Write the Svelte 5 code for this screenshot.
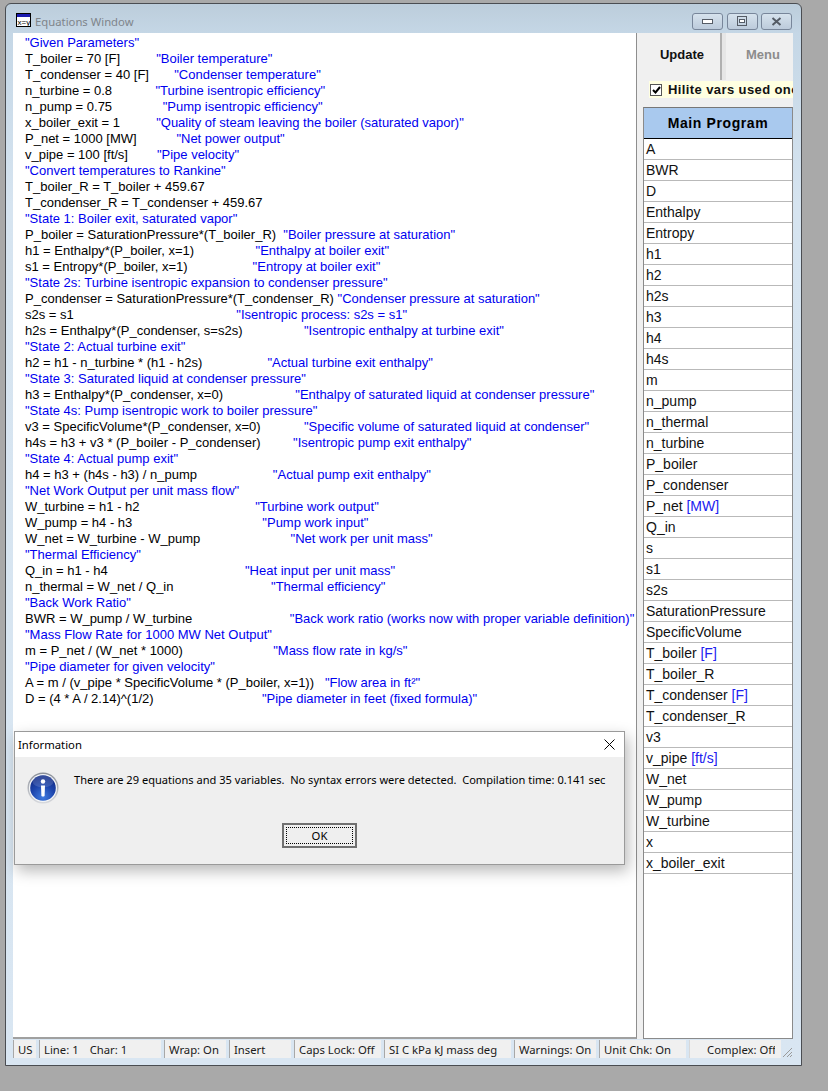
<script lang="ts">
  // Each line is stored as typed in the equations window: code, padding spaces, then the comment
  const pad = (n: number) => " ".repeat(n);

  const lines: [string, string][] = [
    ["", '"Given Parameters"'],
    ["T_boiler = 70 [F]" + pad(10), '"Boiler temperature"'],
    ["T_condenser = 40 [F]" + pad(7), '"Condenser temperature"'],
    ["n_turbine = 0.8" + pad(12), '"Turbine isentropic efficiency"'],
    ["n_pump = 0.75" + pad(14), '"Pump isentropic efficiency"'],
    ["x_boiler_exit = 1" + pad(10), '"Quality of steam leaving the boiler (saturated vapor)"'],
    ["P_net = 1000 [MW]" + pad(11), '"Net power output"'],
    ["v_pipe = 100 [ft/s]" + pad(8), '"Pipe velocity"'],
    ["", '"Convert temperatures to Rankine"'],
    ["T_boiler_R = T_boiler + 459.67", ""],
    ["T_condenser_R = T_condenser + 459.67", ""],
    ["", '"State 1: Boiler exit, saturated vapor"'],
    ["P_boiler = SaturationPressure*(T_boiler_R)" + pad(2), '"Boiler pressure at saturation"'],
    ["h1 = Enthalpy*(P_boiler, x=1)" + pad(17), '"Enthalpy at boiler exit"'],
    ["s1 = Entropy*(P_boiler, x=1)" + pad(18), '"Entropy at boiler exit"'],
    ["", '"State 2s: Turbine isentropic expansion to condenser pressure"'],
    ["P_condenser = SaturationPressure*(T_condenser_R)" + pad(1), '"Condenser pressure at saturation"'],
    ["s2s = s1" + pad(45), '"Isentropic process: s2s = s1"'],
    ["h2s = Enthalpy*(P_condenser, s=s2s)" + pad(17), '"Isentropic enthalpy at turbine exit"'],
    ["", '"State 2: Actual turbine exit"'],
    ["h2 = h1 - n_turbine * (h1 - h2s)" + pad(18), '"Actual turbine exit enthalpy"'],
    ["", '"State 3: Saturated liquid at condenser pressure"'],
    ["h3 = Enthalpy*(P_condenser, x=0)" + pad(20), '"Enthalpy of saturated liquid at condenser pressure"'],
    ["", '"State 4s: Pump isentropic work to boiler pressure"'],
    ["v3 = SpecificVolume*(P_condenser, x=0)" + pad(12), '"Specific volume of saturated liquid at condenser"'],
    ["h4s = h3 + v3 * (P_boiler - P_condenser)" + pad(9), '"Isentropic pump exit enthalpy"'],
    ["", '"State 4: Actual pump exit"'],
    ["h4 = h3 + (h4s - h3) / n_pump" + pad(21), '"Actual pump exit enthalpy"'],
    ["", '"Net Work Output per unit mass flow"'],
    ["W_turbine = h1 - h2" + pad(32), '"Turbine work output"'],
    ["W_pump = h4 - h3" + pad(36), '"Pump work input"'],
    ["W_net = W_turbine - W_pump" + pad(25), '"Net work per unit mass"'],
    ["", '"Thermal Efficiency"'],
    ["Q_in = h1 - h4" + pad(38), '"Heat input per unit mass"'],
    ["n_thermal = W_net / Q_in" + pad(27), '"Thermal efficiency"'],
    ["", '"Back Work Ratio"'],
    ["BWR = W_pump / W_turbine" + pad(27), '"Back work ratio (works now with proper variable definition)"'],
    ["", '"Mass Flow Rate for 1000 MW Net Output"'],
    ["m = P_net / (W_net * 1000)" + pad(25), '"Mass flow rate in kg/s"'],
    ["", '"Pipe diameter for given velocity"'],
    ["A = m / (v_pipe * SpecificVolume * (P_boiler, x=1))" + pad(3), '"Flow area in ft²"'],
    ["D = (4 * A / 2.14)^(1/2)" + pad(30), '"Pipe diameter in feet (fixed formula)"'],
  ];

  const vars: [string, string?][] = [
    ["A"], ["BWR"], ["D"], ["Enthalpy"], ["Entropy"], ["h1"], ["h2"], ["h2s"], ["h3"], ["h4"], ["h4s"], ["m"],
    ["n_pump"], ["n_thermal"], ["n_turbine"], ["P_boiler"], ["P_condenser"], ["P_net", "[MW]"], ["Q_in"], ["s"],
    ["s1"], ["s2s"], ["SaturationPressure"], ["SpecificVolume"], ["T_boiler", "[F]"], ["T_boiler_R"],
    ["T_condenser", "[F]"], ["T_condenser_R"], ["v3"], ["v_pipe", "[ft/s]"], ["W_net"], ["W_pump"], ["W_turbine"],
    ["x"], ["x_boiler_exit"],
  ];

  const status = [
    { text: "US", width: 23 },
    { text: "Line: 1", text2: "Char: 1", width: 122 },
    { text: "Wrap: On", width: 62 },
    { text: "Insert", width: 62 },
    { text: "Caps Lock: Off", width: 87 },
    { text: "SI C kPa kJ mass deg", width: 127 },
    { text: "Warnings: On", width: 82 },
    { text: "Unit Chk: On", width: 87 },
    { text: "Complex: Off", width: 92, clipped: true },
  ];
</script>

<div class="window">
  <header class="titlebar">
    <svg class="app-icon" width="15" height="14" viewBox="0 0 15 14">
      <rect x="0.5" y="0.5" width="14" height="13" fill="#fff" stroke="#000" />
      <rect x="1" y="1" width="13" height="3" fill="#1b1bb0" />
      <text x="1.5" y="11.5" font-size="8" font-family="Liberation Sans, sans-serif">x=y</text>
    </svg>
    <span class="title">Equations Window</span>
    <div class="controls">
      <button class="ctl" aria-label="Minimize">
        <svg width="11" height="5" viewBox="0 0 11 5"><rect x="0.5" y="0.5" width="10" height="4" fill="#fff" stroke="#555c66" /></svg>
      </button>
      <button class="ctl" aria-label="Restore">
        <svg width="10" height="10" viewBox="0 0 10 10"><rect x="0.5" y="0.5" width="9" height="9" fill="none" stroke="#555c66" /><rect x="2.5" y="3.5" width="5" height="3" fill="#fff" stroke="#555c66" /></svg>
      </button>
      <button class="ctl" aria-label="Close">
        <svg width="11" height="9" viewBox="0 0 11 9"><path d="M1.5 1 L9.5 8 M9.5 1 L1.5 8" fill="none" stroke="#555c66" stroke-width="2" /></svg>
      </button>
    </div>
  </header>

  <div class="content">
    <main class="editor">
      {#each lines as [code, note]}
        <div class="line">{code}<span class="note">{note}</span></div>
      {/each}
    </main>

    <aside class="panel">
      <div class="tabs">
        <div class="tab update">Update</div>
        <div class="tab menu">Menu</div>
      </div>
      <div class="hilite">
        <span class="check">
          <svg width="9" height="8" viewBox="0 0 9 8"><path d="M1 4 L3.5 6.5 L8 1" fill="none" stroke="#000" stroke-width="2" /></svg>
        </span>
        <span>Hilite vars used once</span>
      </div>
      <div class="var-box">
        <div class="var-head">Main Program</div>
        {#each vars as [name, unit]}
          <div class="var">{name}{#if unit}{" "}<span class="unit">{unit}</span>{/if}</div>
        {/each}
      </div>
    </aside>
  </div>

  <footer class="statusbar">
    {#each status as s}
      <div class="cell" class:clipped={s.clipped} style:width="{s.width}px">
        <span>{s.text}</span>
        {#if s.text2}<span class="second">{s.text2}</span>{/if}
      </div>
    {/each}
    <svg class="grip" width="12" height="12" viewBox="0 0 12 12">
      <path d="M11 2 L2 11 M11 6 L6 11 M11 9 L9 11" stroke="#9a9a9a" stroke-width="1" fill="none" />
    </svg>
  </footer>

  <section class="dialog">
    <div class="dialog-title">
      <span>Information</span>
      <svg width="11" height="11" viewBox="0 0 11 11"><path d="M0.5 0.5 L10.5 10.5 M10.5 0.5 L0.5 10.5" stroke="#000" stroke-width="1" fill="none" /></svg>
    </div>
    <div class="dialog-body">
      <div class="dialog-msg">
        <svg class="info" width="32" height="32" viewBox="0 0 32 32">
          <defs>
            <radialGradient id="infoBlue" cx="50%" cy="85%" r="75%">
              <stop offset="0" stop-color="#3f7be0" />
              <stop offset="0.6" stop-color="#1d45ac" />
              <stop offset="1" stop-color="#14308c" />
            </radialGradient>
            <linearGradient id="infoRing" x1="0" y1="0" x2="0" y2="1">
              <stop offset="0" stop-color="#8a8f98" />
              <stop offset="1" stop-color="#d8dade" />
            </linearGradient>
          </defs>
          <circle cx="16" cy="16" r="15.5" fill="url(#infoRing)" />
          <circle cx="16" cy="16" r="14" fill="#f4f6f8" />
          <circle cx="16" cy="16" r="12.8" fill="url(#infoBlue)" />
          <ellipse cx="16" cy="9.5" rx="10.5" ry="6" fill="#fff" opacity="0.14" />
          <circle cx="16" cy="9.5" r="2.2" fill="#fff" />
          <path d="M14 13.5 H18 L17.6 24 Q16 25.2 14.4 24 Z" fill="#fff" />
        </svg>
        <p>There are 29 equations and 35 variables.&nbsp; No syntax errors were detected.&nbsp; Compilation time: 0.141 sec</p>
      </div>
      <div class="dialog-actions">
        <button class="ok"><span>OK</span></button>
      </div>
    </div>
  </section>
</div>

<style>
  :global(body) {
    margin: 0;
    background: #a9a9a9;
    font-family: "Liberation Sans", Arial, sans-serif;
  }

  .window {
    position: relative;
    box-sizing: border-box;
    display: flex;
    flex-direction: column;
    width: 797px;
    height: 1063px;
    margin: 3px 0 0 5px;
    padding: 0 8px 7px 7px;
    border: 1px solid #4a4d52;
    border-radius: 6px 6px 0 0;
    background: linear-gradient(#bccddb 0, #c5d7e6 30px, #d6e4f0 200px, #d9e6f2 100%);
    overflow: hidden;
  }

  .titlebar {
    display: flex;
    align-items: center;
    height: 29px;
    flex: none;
  }

  .app-icon {
    margin: 2px 4px 0 3px;
  }

  .title {
    font-family: "Noto Sans", sans-serif;
    font-size: 11.3px;
    color: #7f858b;
    margin-top: 5px;
  }

  .controls {
    display: flex;
    gap: 3.5px;
    margin-left: auto;
    margin-top: 5px;
    margin-right: 1px;
  }

  .ctl {
    display: flex;
    align-items: center;
    justify-content: center;
    width: 31px;
    height: 17px;
    padding: 0;
    border: 1px solid #78869a;
    border-radius: 3px;
    background: linear-gradient(#d6e2ed, #bccbdb);
  }

  .content {
    display: flex;
    flex: 1;
    min-height: 0;
  }

  .editor {
    box-sizing: border-box;
    width: 624px;
    flex: none;
    padding: 2px 0 0 12px;
    background: #fff;
    border-right: 1px solid #8e8e8e;
    border-bottom: 2px solid #a0a0a0;
    overflow: hidden;
  }

  .line {
    height: 16px;
    line-height: 16px;
    font-size: 13px;
    white-space: pre;
    color: #000;
  }

  .note {
    color: #0000f0;
  }

  .panel {
    box-sizing: border-box;
    display: flex;
    flex-direction: column;
    width: 156px;
    flex: none;
    padding-left: 6px;
    background: #f0f0f0;
    overflow: hidden;
  }

  .tabs {
    display: flex;
    height: 47px;
    flex: none;
    margin-left: 1px;
  }

  .tab {
    display: flex;
    align-items: center;
    justify-content: center;
    font-size: 13px;
    font-weight: bold;
    padding-bottom: 4px;
  }

  .update {
    width: 76px;
    border-right: 2px solid #b0b0b0;
    color: #111;
  }

  .menu {
    width: 67px;
    padding-left: 11px;
    box-sizing: border-box;
    border-left: 4px solid #e6e6e6;
    color: #8c8c8c;
  }

  .hilite {
    display: flex;
    align-items: center;
    gap: 6px;
    height: 17px;
    flex: none;
    margin: 1px 0 0 6px;
    padding-left: 1px;
    background: #ffffe1;
    font-size: 13px;
    font-weight: bold;
    letter-spacing: 0.4px;
    color: #111;
    white-space: nowrap;
    overflow: hidden;
  }

  .check {
    display: flex;
    align-items: center;
    justify-content: center;
    box-sizing: border-box;
    flex: none;
    width: 12px;
    height: 12px;
    background: #fff;
    border: 1px solid #555;
  }

  .var-box {
    flex: 1;
    margin-top: 9px;
    border: 1px solid #8a8a8a;
    border-top-color: #777;
    background: #fff;
  }

  .var-head {
    box-sizing: border-box;
    height: 31px;
    line-height: 30px;
    text-align: center;
    font-size: 14px;
    font-weight: bold;
    letter-spacing: 0.6px;
    color: #000;
    background: #a9c9ee;
    border-bottom: 1px solid #000;
  }

  .var {
    box-sizing: border-box;
    height: 21px;
    line-height: 20px;
    padding-left: 2px;
    font-size: 14px;
    white-space: nowrap;
    color: #111;
    border-bottom: 1px solid #b9b9b9;
  }

  .unit {
    color: #2020f0;
  }

  .statusbar {
    display: flex;
    align-items: stretch;
    gap: 3px;
    height: 19px;
    flex: none;
    position: relative;
    padding-top: 1px;
    box-sizing: border-box;
    font-family: "Noto Sans", sans-serif;
    font-size: 11.3px;
    color: #1a1a1a;
  }

  .cell {
    box-sizing: border-box;
    display: flex;
    align-items: center;
    flex: none;
    padding-left: 4px;
    background: #f0f0f0;
    border-left: 1px solid #a8a8a8;
    white-space: nowrap;
    overflow: hidden;
  }

  .cell.clipped {
    padding-left: 17px;
    padding-right: 6px;
    border-left-color: #d8d8d8;
  }

  .cell.clipped span {
    overflow: hidden;
    min-width: 0;
  }

  .second {
    margin-left: 11px;
  }

  .grip {
    position: absolute;
    right: 0;
    bottom: 0;
  }

  .dialog {
    position: absolute;
    left: 8px;
    top: 727px;
    width: 611px;
    height: 134px;
    box-sizing: border-box;
    display: flex;
    flex-direction: column;
    border: 1px solid #9a9a9a;
    background: #efefef;
    box-shadow: 3px 6px 14px rgba(0, 0, 0, 0.28);
    font-family: "Noto Sans", sans-serif;
    font-size: 11.3px;
    color: #000;
  }

  .dialog-title {
    display: flex;
    align-items: center;
    justify-content: space-between;
    height: 25px;
    flex: none;
    padding: 0 9px 0 3px;
    background: #fff;
  }

  .dialog-body {
    flex: 1;
    display: flex;
    flex-direction: column;
  }

  .dialog-msg {
    display: flex;
    align-items: flex-start;
    gap: 15px;
    padding: 15px 0 0 12px;
  }

  .dialog-msg p {
    margin: 0;
    white-space: nowrap;
    font-size: 11.07px;
  }

  .info {
    flex: none;
  }

  .dialog-actions {
    display: flex;
    justify-content: center;
    margin-top: 19px;
  }

  .ok {
    box-sizing: border-box;
    width: 75px;
    height: 25px;
    padding: 2px;
    border: 2px solid #707070;
    background: #efefef;
    font: inherit;
    color: #000;
  }

  .ok span {
    display: flex;
    align-items: center;
    justify-content: center;
    height: 100%;
    border: 1px dotted #000;
    box-sizing: border-box;
  }
</style>
